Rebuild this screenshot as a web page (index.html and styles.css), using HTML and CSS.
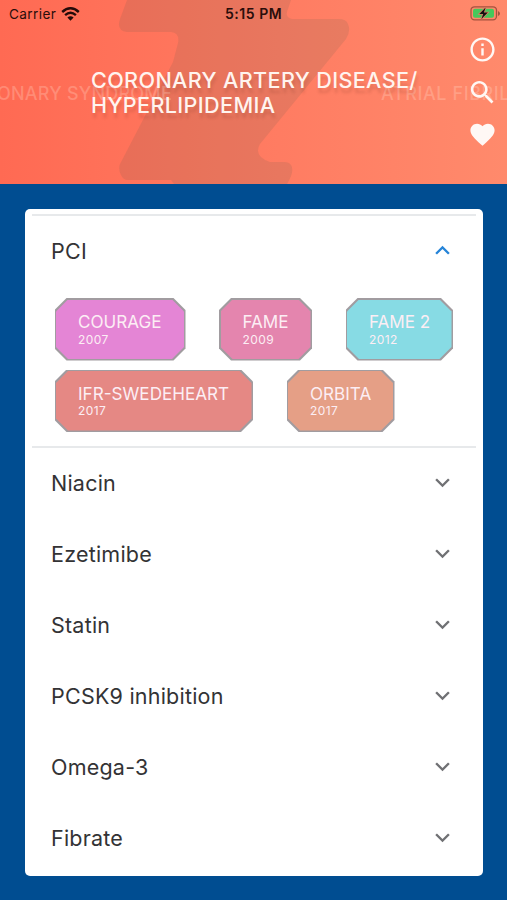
FILE: index.html
```
<!DOCTYPE html>
<html lang="en">
<head>
<meta charset="utf-8">
<title>Clinical trials</title>
<link rel="stylesheet" href="styles.css">
</head>
<body>
<header class="hero">
  <svg class="bolt" viewBox="0 0 507 184" aria-hidden="true"><path d="M127 0 120 19Q116 31 127 32H171Q180 33 178 43L173 62 120 164Q118 169 121 175Q123 180 128 180H171L174 184H287Q295 171 291 165Q289 162 284 162H270Q253 156 260 144L346 39Q351 31 348 24Q346 19 339 19H292Q284 17 288 9L291 0Z"/></svg>
  <div class="status">
    <span class="carrier">Carrier</span>
    <svg class="wifi" viewBox="0 0 19 14"><path d="M1.2 5Q9.5-2.5 17.8 5M4.1 8.1Q9.5 3.4 14.9 8.1"/><path class="dot" d="M6.4 10.4Q9.5 8 12.6 10.4L9.5 13.7Z"/></svg>
    <span class="time">5:15 PM</span>
    <svg class="battery" viewBox="0 0 31 15"><rect class="shell" x="1" y=".8" width="25.5" height="13" rx="3.5"/><rect class="charge" x="3" y="2.8" width="21" height="9" rx="2"/><path class="tip" d="M28 5V10Q30 9 30 7.5T28 5Z"/><path class="flash" d="M15.6 1.5 9.3 8H13.2L11.4 13 17.8 6.6H13.9Z"/></svg>
  </div>
  <span class="ghost ghost-left">ONARY SYNDROME</span>
  <span class="ghost ghost-right">ATRIAL FIBRIL</span>
  <h1 class="title">CORONARY ARTERY DISEASE/<br>HYPERLIPIDEMIA</h1>
  <nav class="actions">
    <svg viewBox="0 0 24 24"><path d="M11 7h2v2h-2zm0 4h2v6h-2zm1-9C6.48 2 2 6.48 2 12s4.48 10 10 10 10-4.48 10-10S17.52 2 12 2zm0 18c-4.41 0-8-3.59-8-8s3.59-8 8-8 8 3.59 8 8-3.59 8-8 8z"/></svg>
    <svg class="search" viewBox="0 0 24 24"><path d="M15.5 14h-.79l-.28-.27C15.41 12.59 16 11.11 16 9.5 16 5.91 13.09 3 9.5 3S3 5.91 3 9.5 5.91 16 9.5 16c1.61 0 3.09-.59 4.23-1.57l.27.28v.79l5 4.99L20.49 19l-4.99-5zm-6 0C7.01 14 5 11.99 5 9.5S7.01 5 9.5 5 14 7.01 14 9.5 11.99 14 9.5 14z"/></svg>
    <svg viewBox="0 0 24 24"><path d="M12 21.35l-1.45-1.32C5.4 15.36 2 12.28 2 8.5 2 5.42 4.42 3 7.5 3c1.74 0 3.41.81 4.5 2.09C13.09 3.81 14.76 3 16.5 3 19.58 3 22 5.42 22 8.5c0 3.78-3.4 6.86-8.55 11.54L12 21.35z"/></svg>
  </nav>
</header>
<main class="card">
  <section class="open">
    <div class="row"><span>PCI</span><svg class="chevron up" viewBox="0 0 24 24"><path d="M12 8l-6 6 1.41 1.41L12 10.83l4.59 4.58L18 14z"/></svg></div>
    <div class="chips">
      <div class="chip courage"><b>COURAGE</b><small>2007</small></div>
      <div class="chip fame"><b>FAME</b><small>2009</small></div>
      <div class="chip fame-two"><b>FAME 2</b><small>2012</small></div>
      <div class="chip swede"><b>IFR-SWEDEHEART</b><small>2017</small></div>
      <div class="chip orbita"><b>ORBITA</b><small>2017</small></div>
    </div>
  </section>
  <div class="row"><span>Niacin</span><svg class="chevron" viewBox="0 0 24 24"><path d="M16.59 8.59L12 13.17 7.41 8.59 6 10l6 6 6-6z"/></svg></div>
  <div class="row"><span>Ezetimibe</span><svg class="chevron" viewBox="0 0 24 24"><path d="M16.59 8.59L12 13.17 7.41 8.59 6 10l6 6 6-6z"/></svg></div>
  <div class="row"><span>Statin</span><svg class="chevron" viewBox="0 0 24 24"><path d="M16.59 8.59L12 13.17 7.41 8.59 6 10l6 6 6-6z"/></svg></div>
  <div class="row"><span>PCSK9 inhibition</span><svg class="chevron" viewBox="0 0 24 24"><path d="M16.59 8.59L12 13.17 7.41 8.59 6 10l6 6 6-6z"/></svg></div>
  <div class="row"><span>Omega-3</span><svg class="chevron" viewBox="0 0 24 24"><path d="M16.59 8.59L12 13.17 7.41 8.59 6 10l6 6 6-6z"/></svg></div>
  <div class="row"><span>Fibrate</span><svg class="chevron" viewBox="0 0 24 24"><path d="M16.59 8.59L12 13.17 7.41 8.59 6 10l6 6 6-6z"/></svg></div>
</main>
</body>
</html>
```
FILE: styles.css
```
* { box-sizing: border-box; }
body {
  margin: 0;
  height: 900px;
  overflow: hidden;
  background: #004d91;
  font-family: Inter, "Liberation Sans", sans-serif;
}
.hero {
  position: relative;
  height: 184px;
  overflow: hidden;
  background: linear-gradient(90deg, #ff6a53, #ff7c62 55%, #ff8a6c);
}
.bolt { position: absolute; inset: 0; width: 507px; height: 184px; fill: #5e5a4c; fill-opacity: .14; }
.status {
  position: relative;
  display: grid;
  grid-template-columns: 48px 168px 1fr 31px;
  align-items: center;
  height: 27px;
  padding: 0 6px 0 9px;
  color: #2a0e0b;
  font-size: 13.6px;
}
.carrier { letter-spacing: .4px; }
.wifi { width: 19px; height: 14px; margin-left: 4px; fill: none; stroke: #250b09; stroke-width: 2.4; }
.wifi .dot { fill: #250b09; stroke: none; }
.time { font-size: 14px; font-weight: 600; letter-spacing: .55px; }
.battery { width: 31px; height: 15px; }
.shell { fill: none; stroke: #a5523f; stroke-width: 1.3; }
.charge { fill: #45c85b; }
.tip { fill: #a5523f; }
.flash { fill: #111; stroke: #d98063; stroke-width: 1.6; paint-order: stroke; }
.ghost {
  position: absolute;
  top: 83px;
  color: rgba(255, 235, 220, .25);
  font-size: 18px;
  font-weight: 500;
  line-height: 22px;
  letter-spacing: .2px;
  white-space: nowrap;
}
.ghost-left { left: -3px; }
.ghost-right { left: 381px; letter-spacing: .6px; }
.title {
  position: relative;
  margin: 40.5px 0 0 91px;
  color: #fff4ef;
  font-size: 21.6px;
  font-weight: 500;
  line-height: 25.5px;
  letter-spacing: .36px;
  white-space: nowrap;
  text-shadow: 1px 5px 3px rgba(110, 50, 35, .18);
}
.actions {
  position: absolute;
  top: 35px;
  right: 10px;
  display: flex;
  flex-direction: column;
  gap: 13.5px;
}
.actions svg { display: block; width: 29px; height: 29px; fill: #fff8f5; }
.actions .search { width: 31px; height: 31px; margin: -1px; }
.card {
  width: 458px;
  height: 667.5px;
  margin: 24.5px 0 0 25px;
  padding: 5.5px 7px 0;
  border-radius: 5px;
  background: #fff;
}
.open { height: 234px; border: solid #e7e9eb; border-width: 2px 0; }
.row {
  display: flex;
  align-items: center;
  justify-content: space-between;
  height: 71px;
  padding: 0 19px 2px;
  color: #333335;
  font-size: 21.5px;
  letter-spacing: .22px;
}
.chevron { width: 29px; height: 29px; fill: #707174; }
.up { fill: #2684d8; }
.chips { display: flex; flex-wrap: wrap; gap: 9px 33.5px; padding: 11px 0 0 22.5px; }
.chip {
  --cut: polygon(12px 0, calc(100% - 12px) 0, 100% 12px, 100% calc(100% - 12px), calc(100% - 12px) 100%, 12px 100%, 0 calc(100% - 12px), 0 12px);
  position: relative;
  z-index: 0;
  display: flex;
  flex-direction: column;
  width: 131px;
  height: 62.5px;
  padding: 13px 0 0 23.5px;
  background: #a19ca0;
  clip-path: var(--cut);
  color: #fceef4;
  white-space: nowrap;
}
.chip::before {
  content: "";
  position: absolute;
  z-index: -1;
  inset: 1.5px;
  background: var(--fill);
  clip-path: var(--cut);
}
.chip b { font-size: 17.1px; font-weight: 400; line-height: 21.5px; }
.chip small { font-size: 12px; line-height: 14px; letter-spacing: .4px; }
.courage { --fill: #e485d5; }
.fame { --fill: #e485ae; width: 93px; }
.fame-two { --fill: #87dbe4; width: 107.5px; }
.swede { --fill: #e58884; width: 198.5px; }
.orbita { --fill: #e59f86; width: 108px; }
```
